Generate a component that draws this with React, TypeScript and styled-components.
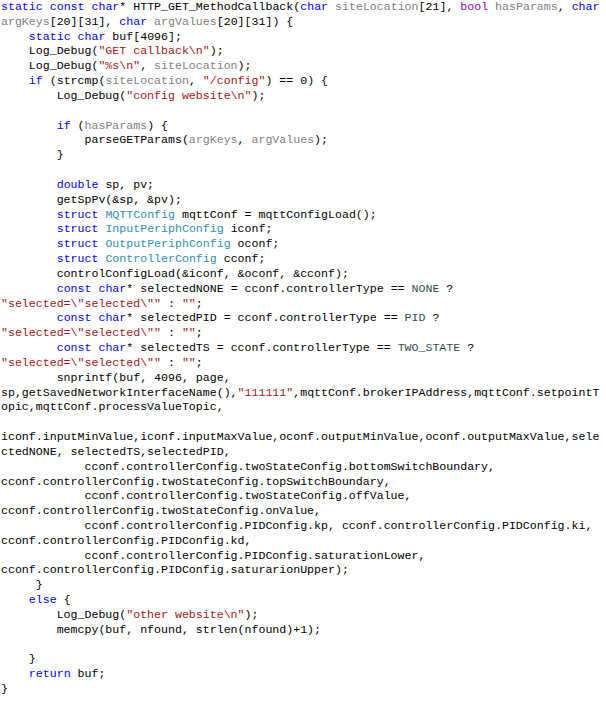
import React from "react";
import styled, { createGlobalStyle } from "styled-components";

const GlobalStyle = createGlobalStyle`
  html, body {
    margin: 0;
    padding: 0;
    background: #ffffff;
  }
`;

type Kind = "plain" | "keyword" | "macro" | "param" | "string" | "type" | "enum";

const colors: Record<Kind, string> = {
  plain: "#000000",
  keyword: "#0000ff",
  macro: "#8f08c4",
  param: "#808080",
  string: "#a31515",
  type: "#2b91af",
  enum: "#2f4f4f",
};

const CodeBlock = styled.pre`
  margin: 0;
  padding: 0 0 0 1px;
  font-family: "Liberation Mono", "DejaVu Sans Mono", monospace;
  font-size: 11.6px;
  line-height: 14.83px;
  color: #000000;
  background: #ffffff;
  white-space: pre;
`;

const Line = styled.div`
  height: 14.83px;
`;

const Token = styled.span<{ $kind: Kind }>`
  color: ${(p) => colors[p.$kind]};
`;

const keywords = new Set(["static", "const", "char", "if", "else", "double", "struct", "return"]);
const macros = new Set(["bool"]);
const params = new Set(["siteLocation", "argKeys", "argValues", "hasParams"]);
const types = new Set(["MQTTConfig", "InputPeriphConfig", "OutputPeriphConfig", "ControllerConfig"]);
const enums = new Set(["NONE", "PID", "TWO_STATE"]);

const lines: string[] = [
  'static const char* HTTP_GET_MethodCallback(char siteLocation[21], bool hasParams, char',
  'argKeys[20][31], char argValues[20][31]) {',
  '    static char buf[4096];',
  '    Log_Debug("GET callback\\n");',
  '    Log_Debug("%s\\n", siteLocation);',
  '    if (strcmp(siteLocation, "/config") == 0) {',
  '        Log_Debug("config website\\n");',
  '',
  '        if (hasParams) {',
  '            parseGETParams(argKeys, argValues);',
  '        }',
  '',
  '        double sp, pv;',
  '        getSpPv(&sp, &pv);',
  '        struct MQTTConfig mqttConf = mqttConfigLoad();',
  '        struct InputPeriphConfig iconf;',
  '        struct OutputPeriphConfig oconf;',
  '        struct ControllerConfig cconf;',
  '        controlConfigLoad(&iconf, &oconf, &cconf);',
  '        const char* selectedNONE = cconf.controllerType == NONE ?',
  '"selected=\\"selected\\"" : "";',
  '        const char* selectedPID = cconf.controllerType == PID ?',
  '"selected=\\"selected\\"" : "";',
  '        const char* selectedTS = cconf.controllerType == TWO_STATE ?',
  '"selected=\\"selected\\"" : "";',
  '        snprintf(buf, 4096, page,',
  'sp,getSavedNetworkInterfaceName(),"111111",mqttConf.brokerIPAddress,mqttConf.setpointT',
  'opic,mqttConf.processValueTopic,',
  '',
  'iconf.inputMinValue,iconf.inputMaxValue,oconf.outputMinValue,oconf.outputMaxValue,sele',
  'ctedNONE, selectedTS,selectedPID,',
  '            cconf.controllerConfig.twoStateConfig.bottomSwitchBoundary,',
  'cconf.controllerConfig.twoStateConfig.topSwitchBoundary,',
  '            cconf.controllerConfig.twoStateConfig.offValue,',
  'cconf.controllerConfig.twoStateConfig.onValue,',
  '            cconf.controllerConfig.PIDConfig.kp, cconf.controllerConfig.PIDConfig.ki,',
  'cconf.controllerConfig.PIDConfig.kd,',
  '            cconf.controllerConfig.PIDConfig.saturationLower,',
  'cconf.controllerConfig.PIDConfig.saturarionUpper);',
  '     }',
  '    else {',
  '        Log_Debug("other website\\n");',
  '        memcpy(buf, nfound, strlen(nfound)+1);',
  '',
  '    }',
  '    return buf;',
  '}',
];

type Tok = { text: string; kind: Kind };

function tokenize(line: string): Tok[] {
  const out: Tok[] = [];
  let i = 0;
  let plain = "";
  const flush = () => {
    if (plain) {
      out.push({ text: plain, kind: "plain" });
      plain = "";
    }
  };
  while (i < line.length) {
    const c = line[i];
    if (c === '"') {
      flush();
      let j = i + 1;
      while (j < line.length && line[j] !== '"') {
        if (line[j] === "\\") j++;
        j++;
      }
      out.push({ text: line.slice(i, j + 1), kind: "string" });
      i = j + 1;
      continue;
    }
    if (/[A-Za-z_]/.test(c)) {
      let j = i;
      while (j < line.length && /[A-Za-z0-9_]/.test(line[j])) j++;
      const word = line.slice(i, j);
      let kind: Kind = "plain";
      if (keywords.has(word)) kind = "keyword";
      else if (macros.has(word)) kind = "macro";
      else if (params.has(word)) kind = "param";
      else if (types.has(word)) kind = "type";
      else if (enums.has(word)) kind = "enum";
      if (kind === "plain") {
        plain += word;
      } else {
        flush();
        out.push({ text: word, kind });
      }
      i = j;
      continue;
    }
    plain += c;
    i++;
  }
  flush();
  return out;
}

export default function App() {
  return (
    <>
      <GlobalStyle />
      <CodeBlock>
        {lines.map((line, li) => (
          <Line key={li}>
            {line === "" ? " " : tokenize(line).map((t, ti) => (
              <Token key={ti} $kind={t.kind}>
                {t.text}
              </Token>
            ))}
          </Line>
        ))}
      </CodeBlock>
    </>
  );
}
